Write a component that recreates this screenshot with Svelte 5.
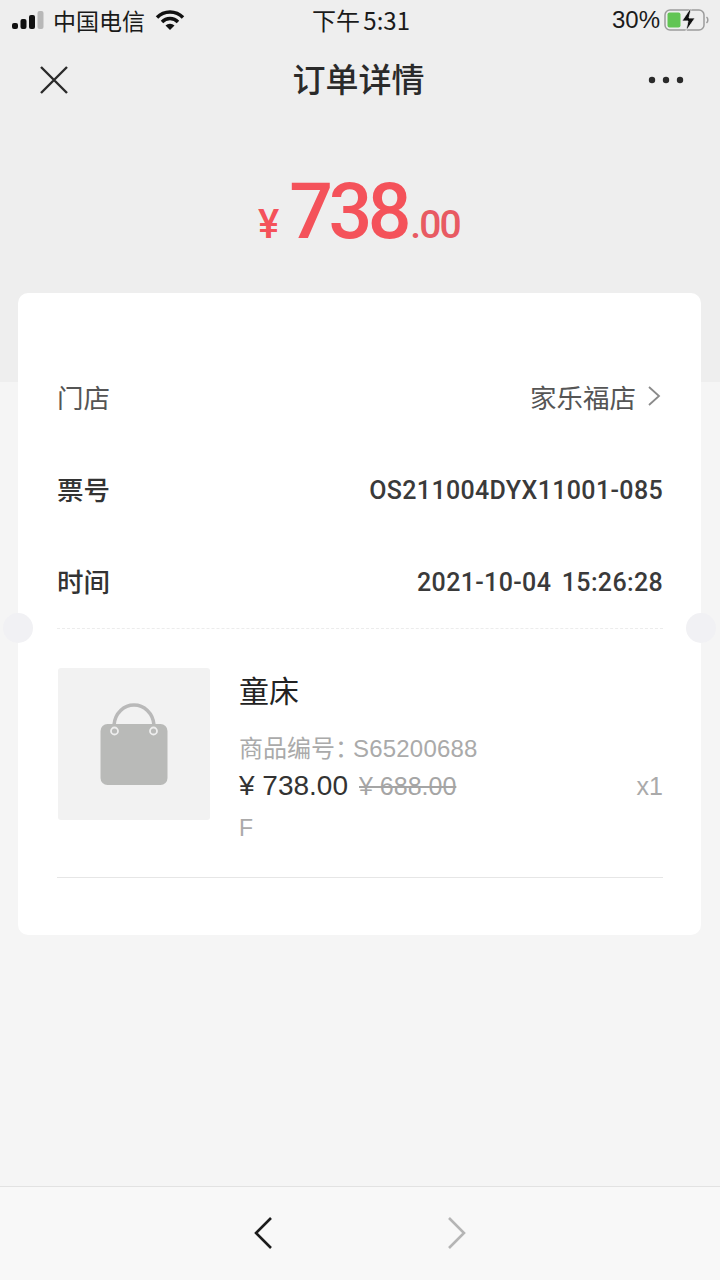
<script lang="ts">
  const rows = [
    { label: '票号', value: 'OS211004DYX11001-085' },
    { label: '时间', value: '2021-10-04 15:26:28' }
  ];
</script>

<div class="page">
  <div class="status">
    <div class="status-left">
      <svg class="signal" width="32" height="20" viewBox="0 0 32 20">
        <rect x="0" y="13" width="6" height="6" rx="2" fill="#111" />
        <rect x="8.5" y="9" width="6" height="10" rx="2" fill="#111" />
        <rect x="17" y="5" width="6" height="14" rx="2" fill="#111" />
        <rect x="25.5" y="1" width="6" height="18" rx="2" fill="#b8b8b8" />
      </svg>
      <span class="carrier">中国电信</span>
      <svg class="wifi" width="30" height="22" viewBox="0 0 30 22">
        <path d="M2 8.5a18 18 0 0 1 26 0" fill="none" stroke="#111" stroke-width="3.4" />
        <path d="M7 13a11 11 0 0 1 16 0" fill="none" stroke="#111" stroke-width="3.4" />
        <path d="M15 21l-4.500-4.500a6.500 6.500 0 0 1 9 0z" fill="#111" />
      </svg>
    </div>
    <span class="clock">下午 5:31</span>
    <div class="status-right">
      <span class="percent">30%</span>
      <svg width="46" height="24" viewBox="0 0 46 24">
        <rect x="1" y="2" width="39" height="20" rx="5" fill="none" stroke="#9c9c9c" stroke-width="1.500" />
        <rect x="3.500" y="4.500" width="13" height="15" rx="2" fill="#62c554" />
        <path d="M26 1l-8 12h6l-2 10 9-13h-6l2-9z" fill="#111" stroke="#eee" stroke-width="0.800" />
        <path d="M42.500 9a4 4 0 0 1 0 6" fill="none" stroke="#9c9c9c" stroke-width="1.500" />
      </svg>
    </div>
  </div>

  <div class="nav">
    <svg width="30" height="30" viewBox="0 0 30 30">
      <path d="M2 2l26 26M28 2L2 28" stroke="#2a2a2a" stroke-width="2.400" fill="none" />
    </svg>
    <h1>订单详情</h1>
    <svg width="36" height="8" viewBox="0 0 36 8">
      <circle cx="4" cy="4" r="3.200" fill="#2a2a2a" />
      <circle cx="18" cy="4" r="3.200" fill="#2a2a2a" />
      <circle cx="32" cy="4" r="3.200" fill="#2a2a2a" />
    </svg>
  </div>

  <div class="amount">
    <span class="yen">¥</span>
    <span class="big">738</span>
    <span class="cents">.00</span>
  </div>

  <div class="card">
    <div class="row first">
      <span class="label">门店</span>
      <span class="store">
        家乐福店
        <svg width="14" height="22" viewBox="0 0 14 22">
          <path d="M2 2l10 9-10 9" fill="none" stroke="#8a8a8a" stroke-width="1.800" />
        </svg>
      </span>
    </div>
    {#each rows as row}
      <div class="row">
        <span class="label">{row.label}</span>
        <span class="value">{row.value}</span>
      </div>
    {/each}

    <div class="tear">
      <span class="notch left"></span>
      <span class="notch right"></span>
    </div>

    <div class="item">
      <div class="thumb">
        <svg width="70" height="82" viewBox="0 0 70 82">
          <path d="M15 22C16 10 25 2 35 2s19 8 20 20" fill="none" stroke="#b9b9b9" stroke-width="3.500" />
          <rect x="1.500" y="21" width="67" height="61" rx="7" fill="#b9bab8" />
          <circle cx="15.500" cy="28" r="3.500" fill="none" stroke="#eee" stroke-width="1.800" />
          <circle cx="54.500" cy="28" r="3.500" fill="none" stroke="#eee" stroke-width="1.800" />
        </svg>
      </div>
      <div class="info">
        <div class="name">童床</div>
        <div class="code">商品编号：<span class="code-no">S65200688</span></div>
        <div class="prices">
          <span class="price">¥ 738.00</span>
          <span class="old">¥ 688.00</span>
          <span class="qty">x1</span>
        </div>
        <div class="size">F</div>
      </div>
    </div>
    <div class="divider"></div>
  </div>

  <div class="spacer"></div>

  <div class="toolbar">
    <svg width="20" height="34" viewBox="0 0 20 34">
      <path d="M18 2L3 17l15 15" fill="none" stroke="#1c1c1c" stroke-width="2.600" />
    </svg>
    <svg width="20" height="34" viewBox="0 0 20 34">
      <path d="M2 2l15 15L2 32" fill="none" stroke="#b5b5b5" stroke-width="2.600" />
    </svg>
  </div>
</div>

<style>
  :global(body) {
    margin: 0;
  }

  .page {
    width: 720px;
    height: 1280px;
    display: flex;
    flex-direction: column;
    overflow: hidden;
    background: linear-gradient(#eeeeee 382px, #f5f5f5 382px);
    font-family: "Noto Sans CJK SC", "Liberation Sans", sans-serif;
    color: #333;
  }

  .status {
    height: 40px;
    padding: 0 10px 0 12px;
    display: grid;
    grid-template-columns: 1fr auto 1fr;
    align-items: center;
    color: #1a1a1a;
  }

  .status-left {
    display: flex;
    align-items: center;
  }

  .carrier {
    margin-left: 9px;
    font-size: 23px;
    line-height: 1;
  }

  .wifi {
    margin-left: 10px;
  }

  .clock {
    font-size: 24px;
    line-height: 1;
    font-family: "Noto Sans CJK SC", sans-serif;
    word-spacing: -2px;
  }

  .status-right {
    display: flex;
    justify-content: flex-end;
    align-items: center;
    gap: 3px;
  }

  .percent {
    font-family: "Liberation Sans", sans-serif;
    font-size: 24px;
    margin-right: 1px;
  }

  .nav {
    height: 80px;
    padding: 0 36px 0 39px;
    display: flex;
    align-items: center;
    justify-content: space-between;
  }

  .nav h1 {
    margin: -4px 0 0 0;
    font-size: 33px;
    font-weight: 500;
    line-height: 1;
    color: #2a2a2a;
  }

  .amount {
    height: 173px;
    display: flex;
    justify-content: center;
    align-items: baseline;
    line-height: 1;
    color: #f4525a;
    font-family: Roboto, sans-serif;
    font-weight: 500;
    padding-top: 54px;
    padding-right: 2px;
    box-sizing: border-box;
  }

  .yen {
    font-size: 40px;
    margin-right: 10px;
  }

  .big {
    font-size: 77px;
    letter-spacing: -4.500px;
  }

  .cents {
    margin-left: 3px;
    font-size: 39px;
    font-weight: 500;
    letter-spacing: -1.800px;
    color: #e85a62;
  }

  .card {
    margin: 0 19px 0 18px;
    height: 642px;
    padding: 59px 38px 0 39px;
    box-sizing: border-box;
    background: #fff;
    border-radius: 10px;
  }

  .row {
    height: 92.500px;
    display: flex;
    align-items: center;
    justify-content: space-between;
  }

  .row.first {
    height: 92px;
  }

  .label {
    margin-top: -4px;
    font-size: 26.500px;
    font-weight: 500;
    color: #333;
  }

  .first .label {
    font-weight: 400;
    color: #555;
  }

  .store {
    margin-top: -4px;
    display: flex;
    align-items: center;
    gap: 11px;
    font-size: 26.500px;
    color: #555;
  }

  .store svg {
    margin-right: 2px;
  }

  .value {
    font-family: Roboto, sans-serif;
    font-weight: 500;
    font-size: 25px;
    letter-spacing: 0.350px;
    word-spacing: 4px;
    color: #3a3a3a;
  }

  .tear {
    position: relative;
    height: 0;
    margin-top: -1px;
    border-top: 1px dashed #ececec;
  }

  .notch {
    position: absolute;
    top: -16px;
    width: 30px;
    height: 30px;
    border-radius: 50%;
    background: #f1f1f4;
  }

  .notch.left {
    left: -54px;
  }

  .notch.right {
    right: -53px;
  }

  .item {
    display: flex;
    gap: 29px;
    margin-top: 39px;
    height: 209px;
  }

  .thumb {
    width: 152px;
    height: 152px;
    margin-left: 1px;
    flex: none;
    display: flex;
    align-items: center;
    justify-content: center;
    background: #f2f2f2;
    border-radius: 3px;
  }

  .info {
    flex: 1;
    display: flex;
    flex-direction: column;
  }

  .name {
    font-size: 30px;
    line-height: 42px;
    color: #222;
  }

  .code {
    margin-top: 20px;
    font-size: 24px;
    line-height: 34px;
    color: #aaa;
  }

  .code-no {
    margin-left: -6px;
    font-family: "Liberation Sans", sans-serif;
    font-size: 24px;
    letter-spacing: 0.200px;
  }

  .prices {
    margin-top: 1px;
    display: flex;
    align-items: baseline;
    font-family: "Liberation Sans", sans-serif;
    line-height: 38px;
  }

  .price {
    font-size: 28px;
    color: #333;
  }

  .old {
    margin-left: 11px;
    font-size: 25px;
    color: #a5a5a5;
    text-decoration: line-through;
  }

  .qty {
    margin-left: auto;
    font-size: 25px;
    color: #aaa;
  }

  .size {
    margin-top: 9px;
    font-family: "Liberation Sans", sans-serif;
    font-size: 23px;
    line-height: 28px;
    color: #aaa;
  }

  .divider {
    height: 1px;
    background: #e6e6e6;
  }

  .spacer {
    flex: 1;
  }

  .toolbar {
    height: 94px;
    padding-bottom: 1px;
    box-sizing: border-box;
    border-top: 1px solid #e2e2e2;
    background: #f8f8f8;
    display: flex;
    justify-content: center;
    align-items: center;
    gap: 174px;
  }
</style>
